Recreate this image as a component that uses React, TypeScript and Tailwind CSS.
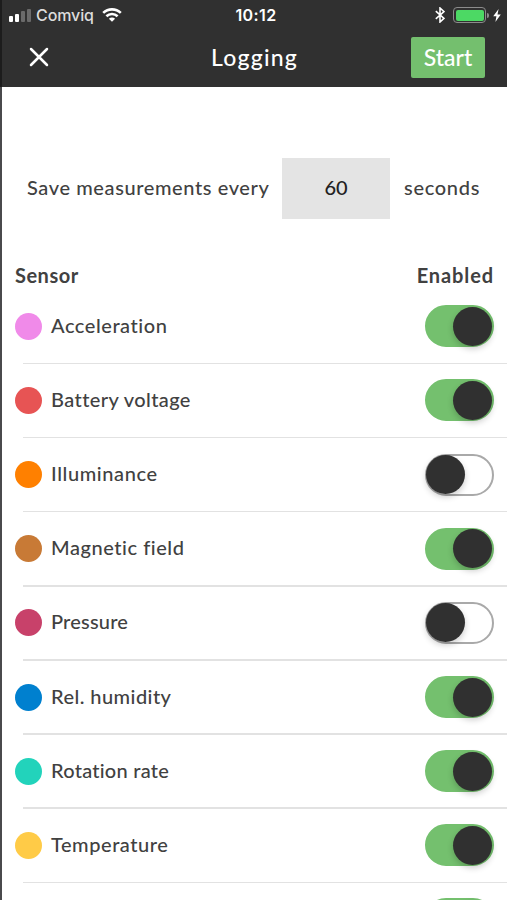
import React, { useState } from 'react';
import { clsx } from 'clsx';

interface Sensor {
  name: string;
  color: string;
  enabled: boolean;
  tracking: string;
}

const initialSensors: Sensor[] = [
  { name: 'Acceleration', color: 'bg-[#f08ae9]', enabled: true, tracking: 'tracking-[0.55px]' },
  { name: 'Battery voltage', color: 'bg-[#e75454]', enabled: true, tracking: 'tracking-[0.4px]' },
  { name: 'Illuminance', color: 'bg-[#ff8000]', enabled: false, tracking: 'tracking-[0.6px]' },
  { name: 'Magnetic field', color: 'bg-[#c87a36]', enabled: true, tracking: 'tracking-[0.55px]' },
  { name: 'Pressure', color: 'bg-[#c8416a]', enabled: false, tracking: 'tracking-[0.2px]' },
  { name: 'Rel. humidity', color: 'bg-[#0080cf]', enabled: true, tracking: 'tracking-[0.45px]' },
  { name: 'Rotation rate', color: 'bg-[#22d3bb]', enabled: true, tracking: 'tracking-[0.25px]' },
  { name: 'Temperature', color: 'bg-[#ffcb47]', enabled: true, tracking: 'tracking-[0.55px]' },
  { name: '', color: 'bg-white', enabled: true, tracking: 'tracking-[0.5px]' },
];

const StatusBar = () => (
  <div className="grid h-[30px] grid-cols-3 items-center pl-[9px] pr-[6px] font-['Inter',sans-serif] text-white">
    <div className="flex items-center">
      <div className="flex h-[13px] items-end gap-[2px]">
        <span className="h-[6px] w-[4px] rounded-[1px] bg-white" />
        <span className="h-[8px] w-[4px] rounded-[1px] bg-white" />
        <span className="h-[11px] w-[4px] rounded-[1px] bg-[#6a6a6a]" />
        <span className="h-[13px] w-[4px] rounded-[1px] bg-[#6a6a6a]" />
      </div>
      <span className="ml-[5px] text-[16px] leading-none tracking-[-0.1px] text-[#dcdcdc]">Comviq</span>
      <svg className="ml-[8px] h-[14px] w-[20px]" viewBox="0 0 20 14" fill="none" stroke="white" strokeWidth="2.6">
        <path d="M1.2 4.9C6.2.2 13.8.2 18.8 4.9" />
        <path d="M4.4 8.2c3.2-3 8-3 11.2 0" />
        <path d="M10 13.8 6.9 10.7c1.8-1.6 4.4-1.6 6.2 0z" fill="white" stroke="none" />
      </svg>
    </div>
    <div className="pl-[2px] text-center text-[16px] font-semibold leading-none tracking-[0.4px]">10:12</div>
    <div className="flex items-center justify-end">
      <svg className="h-[16px] w-[10px]" viewBox="0 0 10 16" fill="none" stroke="white" strokeWidth="1.6">
        <path d="M.8 4.2 9 11.4 5 15V1l4 3.6L.8 11.8" />
      </svg>
      <div className="ml-[8px] h-[16px] w-[33px] rounded-[4px] border border-[#8c8c8c] p-[1.5px]">
        <div className="h-full rounded-[2px] bg-[#4cd964]" />
      </div>
      <span className="ml-px h-[5px] w-[2px] rounded-r-full bg-[#8c8c8c]" />
      <svg className="ml-[4px] h-[13px] w-[8px]" viewBox="0 0 8 13" fill="white">
        <path d="M5.6 0 .2 7.3h3.2L2.4 13 7.8 5.4H4.5z" />
      </svg>
    </div>
  </div>
);

const Header = () => (
  <header className="h-[87px] border-l-2 border-[#1c1c1c] bg-[#303030]">
    <div className="-ml-[2px]">
      <StatusBar />
      <div className="grid h-[54px] grid-cols-3 items-center pl-[29px] pr-[22px] text-white">
        <button aria-label="Close" className="w-[20px]">
          <svg className="h-[20px] w-[20px]" viewBox="0 0 20 20" fill="none" stroke="white" strokeWidth="2.5" strokeLinecap="round">
            <path d="M2 2l16 16M18 2 2 18" />
          </svg>
        </button>
        <h1 className="pr-[5px] text-center text-[23px] font-medium leading-none tracking-[1.2px]">Logging</h1>
        <button className="h-[41px] w-[74px] justify-self-end rounded-[2px] bg-[#74bf6e] text-[23px] font-medium leading-none">
          Start
        </button>
      </div>
    </div>
  </header>
);

interface ToggleProps {
  checked: boolean;
  onChange: () => void;
}

const Toggle = ({ checked, onChange }: ToggleProps) => (
  <button
    role="switch"
    aria-checked={checked}
    onClick={onChange}
    className={clsx(
      'flex h-[42px] w-[69px] items-center rounded-full border-2 transition-colors',
      checked ? 'justify-end border-[#74c06e] bg-[#74c06e]' : 'justify-start border-[#a9a9a9] bg-white',
    )}
  >
    <span
      className={clsx(
        'h-[39px] w-[39px] shrink-0 rounded-full bg-[#303030] shadow-[0_3px_6px_rgba(0,0,0,0.2)]',
        !checked && '-ml-px',
      )}
    />
  </button>
);

const App = () => {
  const [sensors, setSensors] = useState(initialSensors);
  const [interval, setInterval] = useState('60');

  const toggleSensor = (index: number) => {
    setSensors(sensors.map((s, i) => (i === index ? { ...s, enabled: !s.enabled } : s)));
  };

  return (
    <div className="h-[900px] w-[507px] overflow-hidden bg-[#303030] font-['Lato',sans-serif] text-[20px] font-medium text-[#414141]">
      <Header />
      <main className="h-full border-l-2 border-[#4a4a4c] bg-white">
        {/* Interval */}
        <div className="flex items-center pl-[25px] pt-[71px] leading-none">
          <span className="w-[242px] whitespace-nowrap pb-[3px] tracking-[0.6px]">Save measurements every</span>
          <input
            value={interval}
            onChange={(e) => setInterval(e.target.value)}
            className="ml-[13px] h-[61px] w-[108px] bg-[#e4e4e4] pb-[3px] text-center font-medium text-[#222] outline-none"
          />
          <span className="ml-[14px] pb-[3px] tracking-[0.7px]">seconds</span>
        </div>

        {/* Sensor list */}
        <div className="flex h-[71px] items-end justify-between pl-[13px] pr-[13px] font-bold leading-[30px]">
          <span className="tracking-[0.5px]">Sensor</span>
          <span className="tracking-[0.9px]">Enabled</span>
        </div>
        <ul>
          {sensors.map((sensor, index) => (
            <li key={index} className="flex h-[74.15px] flex-col">
              <div className="flex flex-1 items-center pl-[13px] pr-[13px]">
                <span className={clsx('h-[27px] w-[27px] rounded-full', sensor.color)} />
                <span className={clsx('ml-[9px] flex-1 pb-[3px] leading-none', sensor.tracking)}>{sensor.name}</span>
                <Toggle checked={sensor.enabled} onChange={() => toggleSensor(index)} />
              </div>
              <div className="ml-[21px] h-[1.5px] bg-[#e2e2e2]" />
            </li>
          ))}
        </ul>
      </main>
    </div>
  );
};

export default App;
